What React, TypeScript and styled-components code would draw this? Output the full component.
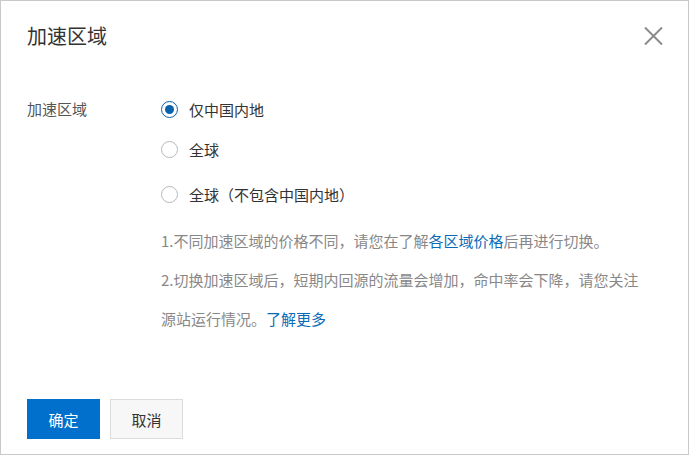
import { useState } from 'react';
import styled, { createGlobalStyle } from 'styled-components';

const GlobalStyle = createGlobalStyle`
  html, body {
    margin: 0;
    padding: 0;
    background: #fff;
  }
  body {
    font-family: "Noto Sans CJK SC", "Noto Sans", "Liberation Sans", sans-serif;
  }
`;

const Dialog = styled.div`
  box-sizing: border-box;
  width: 689px;
  height: 455px;
  border: 1px solid #c9c9c9;
  background: #fff;
  display: flex;
  flex-direction: column;
  color: #333;
`;

const Header = styled.div`
  display: flex;
  justify-content: space-between;
  align-items: center;
  padding: 21px 24px 0 26px;
  height: 28px;
`;

const Title = styled.h2`
  margin: 0;
  font-size: 20px;
  line-height: 28px;
  font-weight: 400;
  color: #333;
`;

const CloseButton = styled.button`
  width: 22px;
  height: 22px;
  padding: 0;
  border: 0;
  background: none;
  cursor: pointer;
  display: flex;
  align-items: center;
  justify-content: center;
`;

const Body = styled.div`
  display: grid;
  grid-template-columns: 134px 1fr;
  padding: 48px 44px 0 26px;
`;

const Label = styled.div`
  font-size: 15px;
  line-height: 22px;
  color: #555;
`;

const Options = styled.div`
  display: flex;
  flex-direction: column;
`;

const Option = styled.label<{ gap: number }>`
  display: flex;
  align-items: center;
  height: 22px;
  margin-bottom: ${(p) => p.gap}px;
  font-size: 15px;
  color: #333;
  cursor: pointer;
`;

const RadioCircle = styled.span<{ checked: boolean }>`
  box-sizing: border-box;
  width: 17px;
  height: 17px;
  border-radius: 50%;
  border: 1px solid ${(p) => (p.checked ? '#0a5fa8' : '#b8b8b8')};
  margin-right: 11px;
  display: flex;
  align-items: center;
  justify-content: center;
  &::after {
    content: '';
    display: ${(p) => (p.checked ? 'block' : 'none')};
    width: 9px;
    height: 9px;
    border-radius: 50%;
    background: #0a62ad;
  }
`;

const HalfPunct = styled.span`
  font-feature-settings: "halt";
`;

const Notes = styled.div`
  margin-top: 16px;
  font-size: 15px;
  color: #888;
`;

const Note = styled.p`
  margin: 0;
  line-height: 39px;
`;

const Link = styled.a`
  color: #0a6cb8;
  text-decoration: none;
  cursor: pointer;
`;

const Footer = styled.div`
  margin-top: auto;
  display: flex;
  gap: 10px;
  padding: 0 0 15px 26px;
`;

const Button = styled.button<{ primary?: boolean }>`
  box-sizing: border-box;
  width: 73px;
  height: 40px;
  font-family: inherit;
  font-size: 15px;
  border: 1px solid ${(p) => (p.primary ? '#0070cc' : '#dcdcdc')};
  background: ${(p) => (p.primary ? '#0070cc' : '#f7f7f7')};
  color: ${(p) => (p.primary ? '#fff' : '#333')};
  cursor: pointer;
`;

const options = [
  { value: 'domestic', label: <>仅中国内地</>, gap: 18 },
  { value: 'global', label: <>全球</>, gap: 23 },
  {
    value: 'overseas',
    label: (
      <>
        全球（不包含中国内地<HalfPunct>）</HalfPunct>
      </>
    ),
    gap: 0,
  },
];

export default function App() {
  const [area, setArea] = useState('domestic');

  return (
    <>
      <GlobalStyle />
      <Dialog>
        <Header>
          <Title>加速区域</Title>
          <CloseButton aria-label="close">
            <svg width="19" height="18" viewBox="0 0 19 18">
              <path d="M1 0.5 L18 17.5 M18 0.5 L1 17.5" stroke="#8a8a8a" strokeWidth="2" fill="none" />
            </svg>
          </CloseButton>
        </Header>
        <Body>
          <Label>加速区域</Label>
          <div>
            <Options>
              {options.map((o) => (
                <Option key={o.value} gap={o.gap} onClick={() => setArea(o.value)}>
                  <RadioCircle checked={area === o.value} />
                  {o.label}
                </Option>
              ))}
            </Options>
            <Notes>
              <Note>
                1.不同加速区域的价格不同，请您在了解<Link>各区域价格</Link>后再进行切换。
              </Note>
              <Note>
                2.切换加速区域后，短期内回源的流量会增加，命中率会下降，请您关注源站运行情况。<Link>了解更多</Link>
              </Note>
            </Notes>
          </div>
        </Body>
        <Footer>
          <Button primary>确定</Button>
          <Button>取消</Button>
        </Footer>
      </Dialog>
    </>
  );
}
